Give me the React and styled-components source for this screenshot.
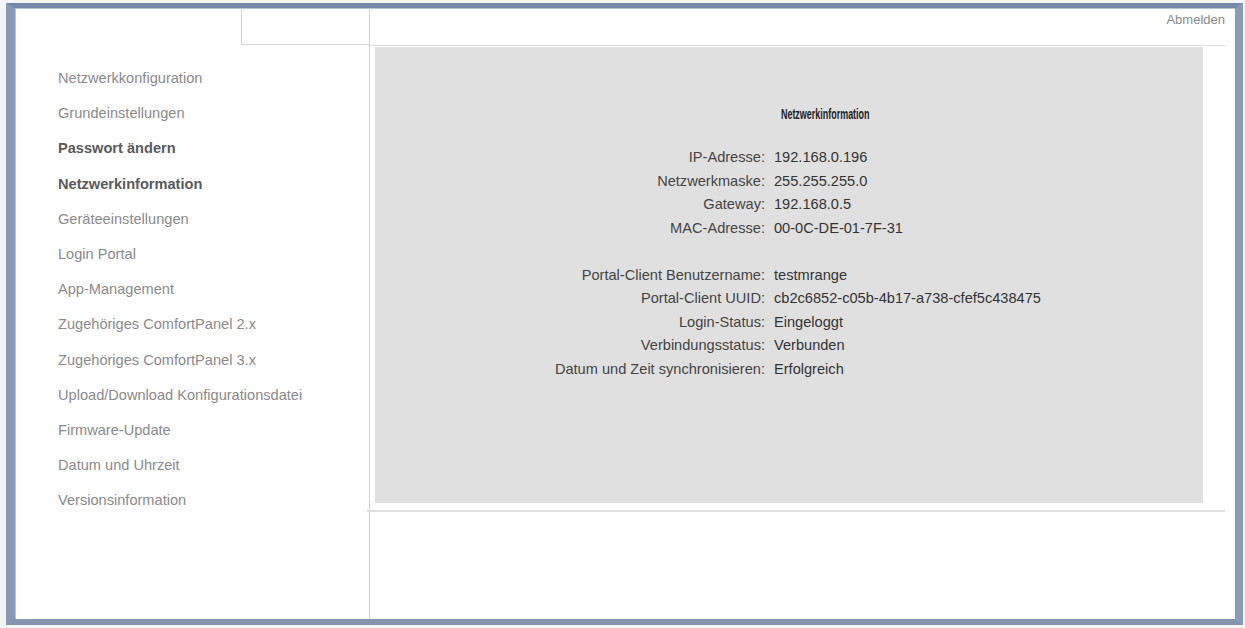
import React from 'react';
import styled, { createGlobalStyle } from 'styled-components';

const GlobalStyle = createGlobalStyle`
    html, body {
        margin: 0;
        padding: 0;
        background: #ffffff;
        font-family: "Liberation Sans", Arial, sans-serif;
    }
`

const Page = styled.div`
    width: 1245px;
    height: 628px;
    box-sizing: border-box;
    padding: 3px 2px 3px 6px;
    background: #f4f5f7;
`

const Frame = styled.div`
    height: 100%;
    box-sizing: border-box;
    display: flex;
    flex-flow: row nowrap;
    background: #ffffff;
    border-style: solid;
    border-width: 5px 8px 6px 9px;
    border-color: #7489a9 #8a9bb4 #8494ae #8799b6;
    box-shadow: inset 1px 1px 0 #b7c3d4;
`

const Sidebar = styled.nav`
    width: 355px;
    flex: 0 0 auto;
    box-sizing: border-box;
    border-right: 1px solid #d4d4d4;
    display: flex;
    flex-direction: column;
`

const SideTop = styled.div`
    height: 37px;
    display: flex;
    justify-content: flex-end;
`

const Tab = styled.div`
    width: 127px;
    border-left: 1px solid #d4d4d4;
    border-bottom: 1px solid #d4d4d4;
`

const NavList = styled.ul`
    list-style: none;
    margin: 0;
    padding: 16px 0 0 43px;
`

const NavItem = styled.li`
    font-size: 14.6px;
    line-height: 35.2px;
    white-space: nowrap;
    color: ${p => (p.$strong ? '#5a5a5a' : '#8a8a8a')};
    font-weight: ${p => (p.$strong ? 700 : 400)};
`

const Main = styled.main`
    flex: 1;
    display: flex;
    flex-direction: column;
    padding-right: 10px;
`

const Header = styled.header`
    height: 37px;
    border-bottom: 1px solid #dcdcdc;
    display: flex;
    justify-content: flex-end;
    align-items: flex-start;
`

const Logout = styled.span`
    font-size: 13px;
    line-height: 24px;
    color: #8a8a8a;
`

const Panel = styled.section`
    height: 456px;
    margin: 1px 22px 0 5px;
    background: #e0e0e0;
    padding-top: 57px;
    box-sizing: border-box;
`

const Title = styled.h2`
    margin: 0 0 21px 0;
    padding-left: 73px;
    text-align: center;
    font-size: 14px;
    line-height: 21px;
    font-weight: 700;
    color: #222222;
`

const Condensed = styled.span`
    display: inline-block;
    transform: scaleX(0.64);
`

const InfoGrid = styled.div`
    display: grid;
    grid-template-columns: 390px auto;
    column-gap: 9px;
    font-size: 14.6px;
    line-height: 23.5px;
`

const Label = styled.span`
    text-align: right;
    color: #444444;
    white-space: nowrap;
`

const Value = styled.span`
    color: #333333;
    white-space: nowrap;
`

const Spacer = styled.div`
    grid-column: 1 / 3;
    height: 23.5px;
`

const Divider = styled.div`
    height: 2px;
    margin: 7px 0 0 -3px;
    background: #dedede;
`

const navItems = [
    { text: 'Netzwerkkonfiguration' },
    { text: 'Grundeinstellungen' },
    { text: 'Passwort ändern', strong: true },
    { text: 'Netzwerkinformation', strong: true },
    { text: 'Geräteeinstellungen' },
    { text: 'Login Portal' },
    { text: 'App-Management' },
    { text: 'Zugehöriges ComfortPanel 2.x' },
    { text: 'Zugehöriges ComfortPanel 3.x' },
    { text: 'Upload/Download Konfigurationsdatei' },
    { text: 'Firmware-Update' },
    { text: 'Datum und Uhrzeit' },
    { text: 'Versionsinformation' },
];

const network = [
    ['IP-Adresse:', '192.168.0.196'],
    ['Netzwerkmaske:', '255.255.255.0'],
    ['Gateway:', '192.168.0.5'],
    ['MAC-Adresse:', '00-0C-DE-01-7F-31'],
];

const portal = [
    ['Portal-Client Benutzername:', 'testmrange'],
    ['Portal-Client UUID:', 'cb2c6852-c05b-4b17-a738-cfef5c438475'],
    ['Login-Status:', 'Eingeloggt'],
    ['Verbindungsstatus:', 'Verbunden'],
    ['Datum und Zeit synchronisieren:', 'Erfolgreich'],
];

const Rows = ({ rows }) =>
    rows.map(([label, value]) => (
        <React.Fragment key={label}>
            <Label>{label}</Label>
            <Value>{value}</Value>
        </React.Fragment>
    ));

export default function App() {
    return (
        <Page>
            <GlobalStyle />
            <Frame>
                <Sidebar>
                    <SideTop>
                        <Tab />
                    </SideTop>
                    <NavList>
                        {navItems.map(item => (
                            <NavItem key={item.text} $strong={item.strong}>{item.text}</NavItem>
                        ))}
                    </NavList>
                </Sidebar>
                <Main>
                    <Header>
                        <Logout>Abmelden</Logout>
                    </Header>
                    <Panel>
                        <Title><Condensed>Netzwerkinformation</Condensed></Title>
                        <InfoGrid>
                            <Rows rows={network} />
                            <Spacer />
                            <Rows rows={portal} />
                        </InfoGrid>
                    </Panel>
                    <Divider />
                </Main>
            </Frame>
        </Page>
    );
}
